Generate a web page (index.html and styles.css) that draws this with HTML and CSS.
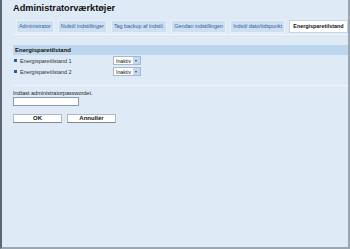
FILE: index.html
```html
<!DOCTYPE html>
<html lang="da">
<head>
    <meta charset="UTF-8">
    <meta name="viewport" content="width=device-width, initial-scale=1.0">
    <title>Administratorværktøjer</title>
    <link rel="stylesheet" href="styles.css">
</head>
<body>
    <div class="frame">
        <h1>Administratorværktøjer</h1>

        <!-- Tabs -->
        <div class="tabs">
            <span class="tab">Administrator</span>
            <span class="tab">Nulstil indstillinger</span>
            <span class="tab">Tag backup af indstil.</span>
            <span class="tab">Gendan indstillingen</span>
            <span class="tab">Indstil dato/tidspunkt</span>
            <span class="tab active">Energisparetilstand</span>
        </div>

        <!-- Energy saver -->
        <div class="section-title">Energisparetilstand</div>
        <div class="row">
            <span class="bullet"></span>
            <span class="row-label">Energisparetilstand 1</span>
            <span class="select">Inaktiv<span class="arrow"></span></span>
        </div>
        <div class="row">
            <span class="bullet"></span>
            <span class="row-label">Energisparetilstand 2</span>
            <span class="select">Inaktiv<span class="arrow"></span></span>
        </div>

        <div class="password">
            <label for="pw">Indtast administratorpasswordet.</label>
            <input type="password" id="pw">
        </div>
        <div class="buttons">
            <button>OK</button>
            <button>Annullér</button>
        </div>
    </div>
</body>
</html>
```

FILE: styles.css
```css
body {
    margin: 0;
    padding: 0;
    font-family: "Liberation Sans", Arial, sans-serif;
    color: #222;
}
.frame {
    width: 335px;
    height: 247px;
    padding: 0 0 0 11px;
    background: #deeaf6;
    border-left: 2px solid #5c6670;
    border-right: 2px solid #9aa6b2;
    border-bottom: 2px solid #9aa6b2;
    overflow: hidden;
}
h1 {
    margin: 0;
    padding-top: 3px;
    font-size: 9.2px;
    line-height: 11px;
    font-weight: bold;
    color: #111;
}
.tabs {
    display: flex;
    gap: 4px;
    margin-top: 6px;
    padding-left: 3px;
    padding-bottom: 1px;
    border-bottom: 1px solid #f2f6fb;
}
.tab {
    height: 11px;
    line-height: 11px;
    padding: 0 2px;
    font-size: 5.4px;
    color: #3060a0;
    background: #cddff1;
    border: 1px solid #e8f0f8;
    white-space: nowrap;
}
.tab.active {
    padding: 0 3px;
    background: #fff;
    color: #111;
    font-weight: bold;
    border-color: #c8d4e0;
}
.section-title {
    margin-top: 10px;
    height: 10px;
    line-height: 10px;
    padding-left: 2px;
    background: #bcd6ee;
    font-size: 6px;
    font-weight: bold;
    color: #111;
}
.row {
    display: flex;
    align-items: center;
    height: 11px;
    font-size: 5.5px;
    color: #333;
}
.row:first-of-type {
    margin-top: 1px;
}
.bullet {
    width: 3px;
    height: 3px;
    margin: 0 3px 0 1px;
    background: #2a5aa0;
}
.row-label {
    width: 93px;
}
.select {
    display: flex;
    align-items: center;
    height: 7px;
    padding-left: 2px;
    background: #fff;
    border: 1px solid #a8b8cc;
    font-size: 5.2px;
    color: #111;
}
.arrow {
    width: 7px;
    height: 7px;
    margin-left: 2px;
    background: #c6d6ee;
    position: relative;
}
.arrow::after {
    content: "";
    position: absolute;
    left: 2px;
    top: 2.5px;
    border-left: 1.5px solid transparent;
    border-right: 1.5px solid transparent;
    border-top: 2px solid #2a4a80;
}
.password {
    margin-top: 8px;
    padding-top: 4px;
    border-top: 1px solid #eef3f9;
}
.password label {
    display: block;
    font-size: 5.5px;
    line-height: 7px;
    color: #222;
}
.password input {
    display: block;
    width: 64px;
    height: 7px;
    margin: 0;
    padding: 0;
    border: 1px solid #8a9aaa;
    background: #fff;
}
.buttons {
    display: flex;
    gap: 5px;
    margin-top: 8px;
}
.buttons button {
    width: 49px;
    height: 9px;
    padding: 0;
    font-family: "Liberation Sans", Arial, sans-serif;
    font-size: 6px;
    font-weight: bold;
    line-height: 7px;
    color: #111;
    background: #fff;
    border: 1px solid #b0b8c0;
    border-bottom-color: #808890;
}
```
